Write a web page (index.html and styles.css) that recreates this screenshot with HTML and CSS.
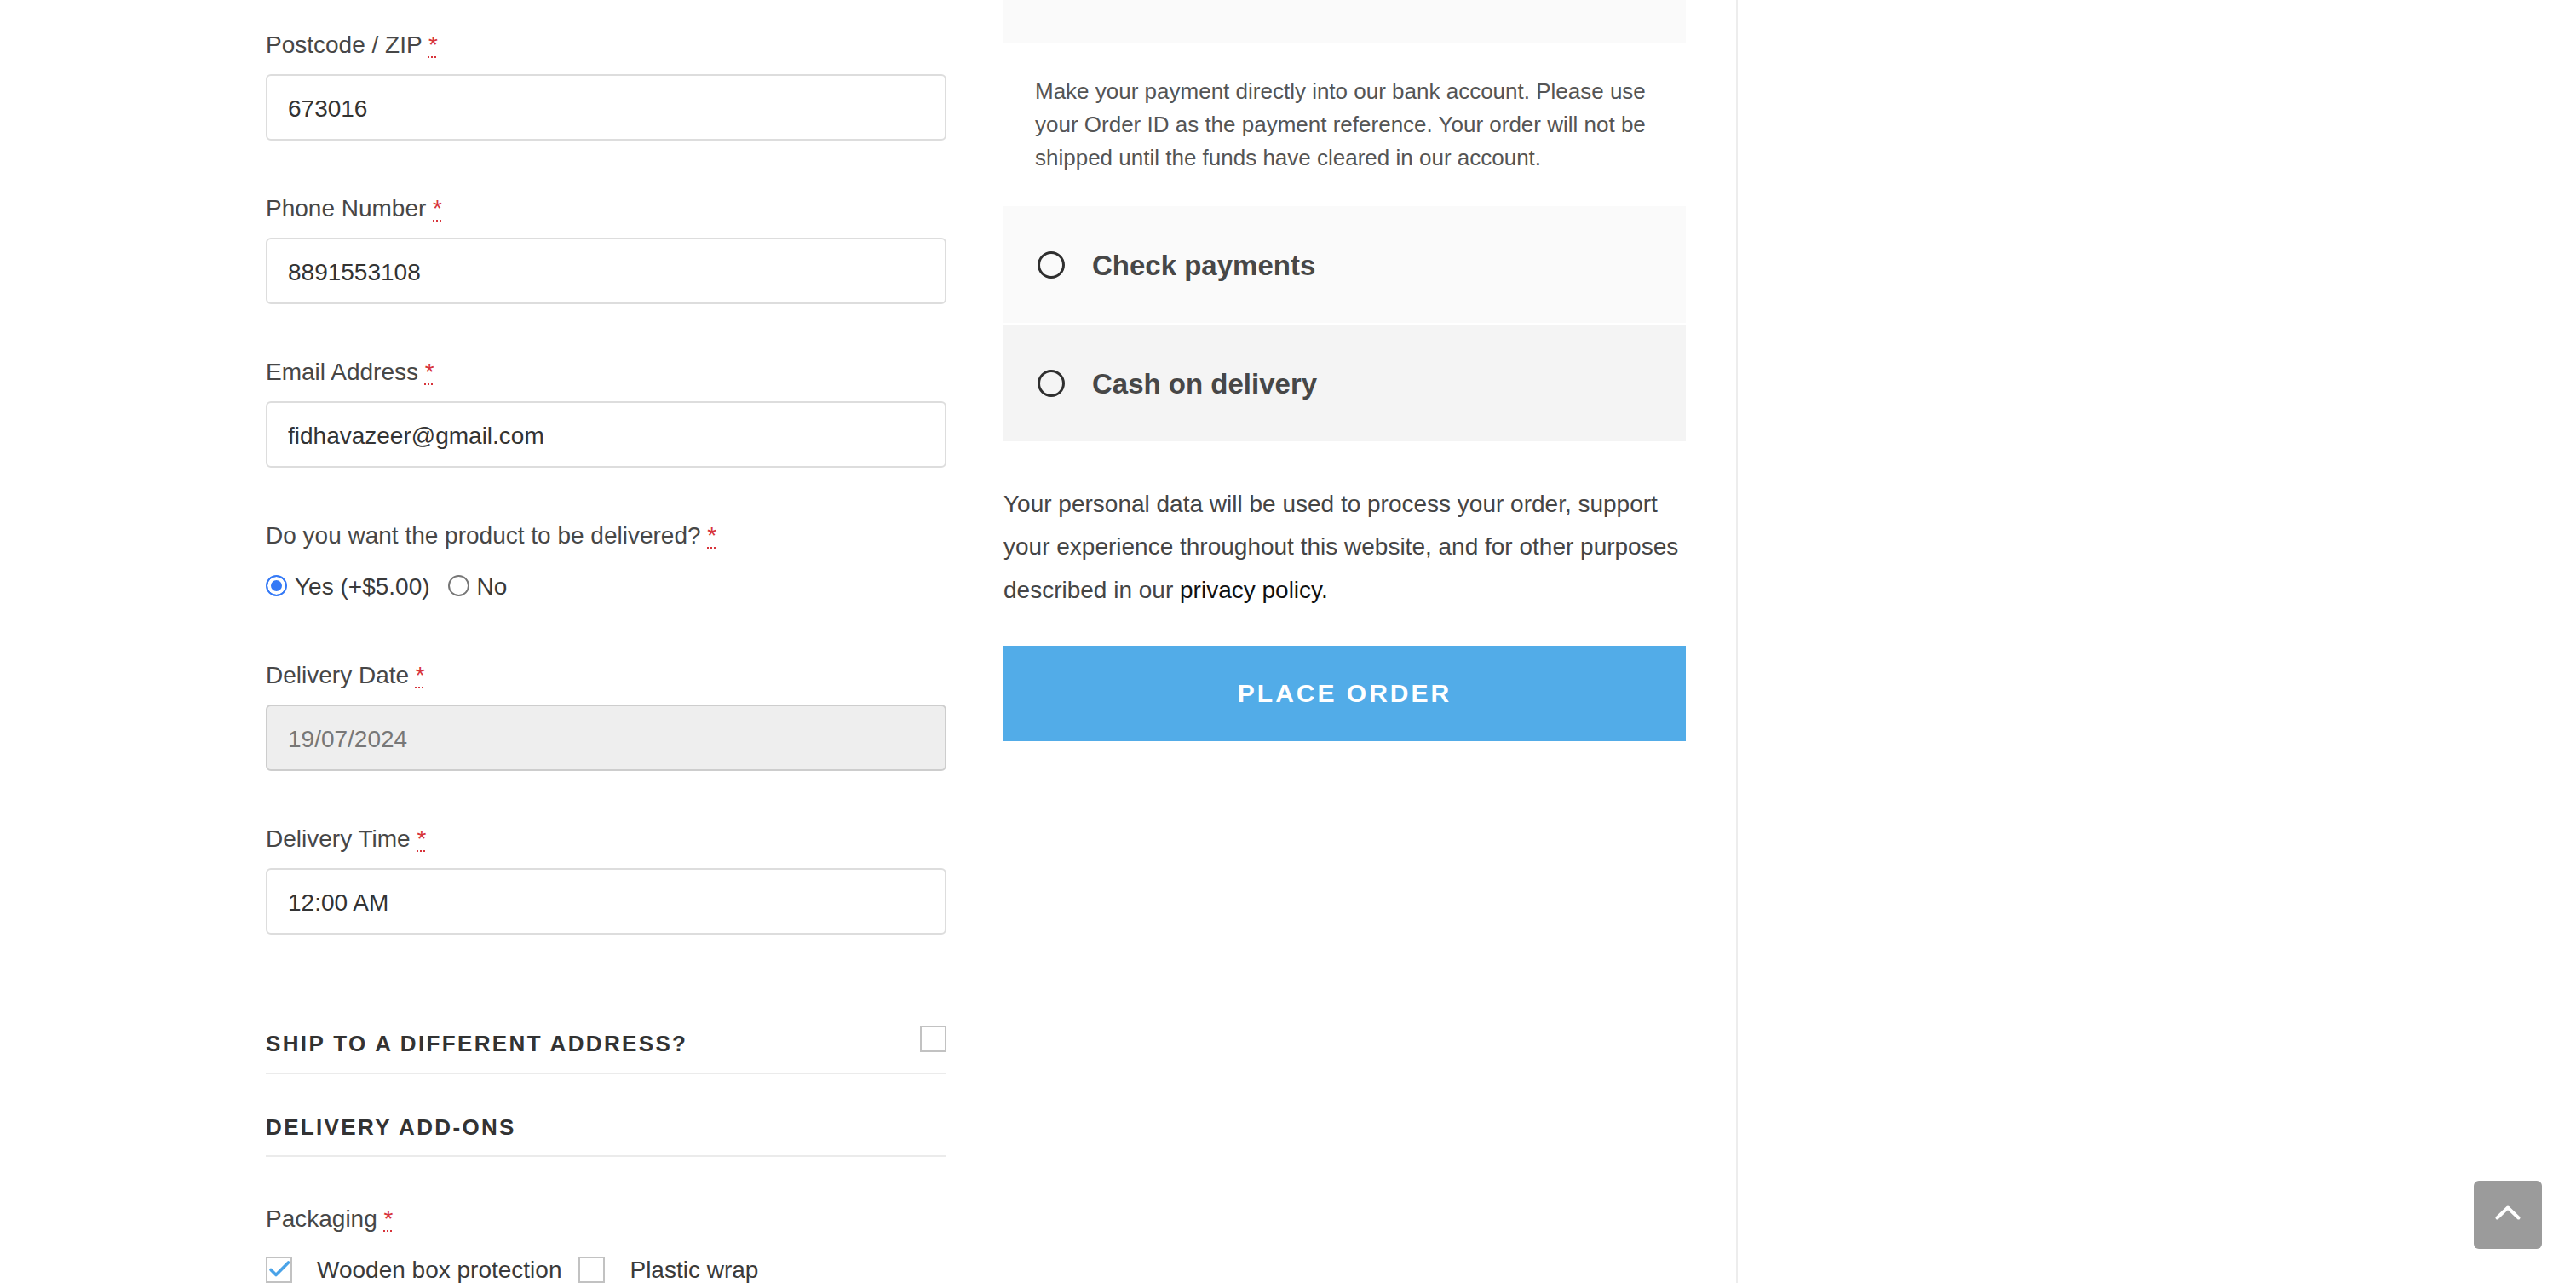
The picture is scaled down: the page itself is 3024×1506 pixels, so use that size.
FILE: index.html
```html
<!DOCTYPE html>
<html lang="en">
<head>
<meta charset="utf-8">
<title>Checkout</title>
<link rel="stylesheet" href="styles.css">
</head>
<body>
<div class="page">
  <main class="checkout">
    <section class="billing">
      <div class="field">
        <label class="field-label" for="postcode">Postcode / ZIP <abbr class="required" title="required">*</abbr></label>
        <input class="input" id="postcode" type="text" value="673016">
      </div>
      <div class="field">
        <label class="field-label" for="phone">Phone Number <abbr class="required" title="required">*</abbr></label>
        <input class="input" id="phone" type="text" value="8891553108">
      </div>
      <div class="field">
        <label class="field-label" for="email">Email Address <abbr class="required" title="required">*</abbr></label>
        <input class="input" id="email" type="text" value="fidhavazeer@gmail.com">
      </div>
      <div class="field field-radio">
        <span class="field-label">Do you want the product to be delivered? <abbr class="required" title="required">*</abbr></span>
        <div class="options">
          <label class="option"><span class="radio radio-on"></span><span class="option-text">Yes (+$5.00)</span></label>
          <label class="option"><span class="radio"></span><span class="option-text">No</span></label>
        </div>
      </div>
      <div class="field">
        <label class="field-label" for="ddate">Delivery Date <abbr class="required" title="required">*</abbr></label>
        <input class="input input-disabled" id="ddate" type="text" value="19/07/2024" readonly>
      </div>
      <div class="field field-last">
        <label class="field-label" for="dtime">Delivery Time <abbr class="required" title="required">*</abbr></label>
        <input class="input" id="dtime" type="text" value="12:00 AM">
      </div>

      <h3 class="section-heading heading-ship">
        <span class="heading-text">Ship to a different address?</span>
        <span class="box box-ship"></span>
      </h3>
      <h3 class="section-heading heading-addons"><span class="heading-text">Delivery Add-ons</span></h3>

      <div class="field field-pack">
        <span class="field-label">Packaging <abbr class="required" title="required">*</abbr></span>
        <div class="options">
          <label class="check">
            <span class="box"><svg class="tick" viewBox="0 0 27 27" width="27" height="27"><path d="M4 13.5 L10 19.5 L24.5 5" fill="none" stroke="#4aa3e8" stroke-width="3.6" stroke-linecap="round" stroke-linejoin="round"/></svg></span>
            <span class="check-text">Wooden box protection</span>
          </label>
          <label class="check">
            <span class="box"></span>
            <span class="check-text">Plastic wrap</span>
          </label>
        </div>
      </div>
    </section>

    <section class="payment">
      <div class="method-head"></div>
      <div class="method-desc">
        <p>Make your payment directly into our bank account. Please use your Order ID as the payment reference. Your order will not be shipped until the funds have cleared in our account.</p>
      </div>
      <div class="method method-check">
        <span class="pay-radio"></span>
        <span class="method-name">Check payments</span>
      </div>
      <div class="method method-cod">
        <span class="pay-radio"></span>
        <span class="method-name">Cash on delivery</span>
      </div>
      <p class="privacy">Your personal data will be used to process your order, support your experience throughout this website, and for other purposes described in our <a class="privacy-link" href="#">privacy policy.</a></p>
      <button class="place-order" type="button">Place order</button>
    </section>
  </main>
  <aside class="sidebar"></aside>
</div>
<a class="to-top" href="#" aria-label="Scroll to top">
  <svg viewBox="0 0 80 80" width="80" height="80"><path d="M27.5 43.5 L40 31.5 L52.5 43.5" fill="none" stroke="#fff" stroke-width="4" stroke-linecap="round" stroke-linejoin="round"/></svg>
</a>
</body>
</html>
```

FILE: styles.css
```css
html, body {
  margin: 0;
  padding: 0;
  height: 1506px;
  overflow: hidden;
  background: #fff;
}

body {
  font-family: "Liberation Sans", Arial, Helvetica, sans-serif;
  color: #444;
}

.page {
  display: flex;
  height: 1506px;
  padding-left: 312px;
  box-sizing: border-box;
}

.checkout {
  display: grid;
  grid-template-columns: 799px 801px;
  column-gap: 67px;
  align-items: start;
}

/* ---------- Billing column ---------- */
.billing {
  display: flex;
  flex-direction: column;
  padding-top: 31px;
}

.field {
  display: flex;
  flex-direction: column;
  margin-bottom: 58px;
}

.field-label {
  display: block;
  font-size: 28px;
  line-height: 40px;
  color: #474747;
  padding-top: 2px;
  margin-bottom: 14px;
}

.required {
  color: #d7343b;
  text-decoration: underline dotted;
  text-decoration-thickness: 2px;
  text-underline-offset: 4px;
  border: 0;
}

.input {
  box-sizing: border-box;
  width: 100%;
  height: 78px;
  margin: 0;
  padding: 3px 24px 0;
  border: 2px solid #dddddd;
  border-radius: 6px;
  background: #fff;
  font-family: "Liberation Sans", Arial, Helvetica, sans-serif;
  font-size: 28px;
  color: #333;
  outline: none;
}

.input-disabled {
  background: #eeeeee;
  border-color: #cdcdcd;
  color: #777;
}

.field-radio {
  margin-bottom: 63px;
}

.options {
  display: flex;
  align-items: center;
  height: 40px;
  margin-top: 5px;
}

.option {
  display: flex;
  align-items: center;
  font-size: 28px;
  line-height: 40px;
  color: #3a3a3a;
}

.option-text {
  padding-top: 2px;
}

.option + .option {
  margin-left: 21px;
}

.radio {
  box-sizing: border-box;
  width: 25px;
  height: 25px;
  border-radius: 50%;
  border: 2px solid #767676;
  background: #fff;
  margin-right: 9px;
  margin-bottom: 2px;
}

.radio-on {
  border-color: #3479f6;
  background: #3479f6;
  box-shadow: inset 0 0 0 4px #fff;
}

.field-last {
  margin-bottom: 0;
}

.section-heading {
  display: flex;
  justify-content: space-between;
  align-items: flex-start;
  margin: 0;
  font-size: 26px;
  font-weight: 700;
  line-height: 40px;
  letter-spacing: 2.35px;
  text-transform: uppercase;
  color: #333;
  border-bottom: 2px solid #ebebeb;
}

.heading-text {
  padding-top: 2px;
}

.heading-ship {
  margin-top: 106px;
  padding-bottom: 14px;
}

.heading-addons {
  margin-top: 40px;
  padding-bottom: 13px;
}

.box {
  box-sizing: border-box;
  display: inline-flex;
  align-items: center;
  justify-content: center;
  width: 31px;
  height: 31px;
  border: 2px solid #c2c2c2;
  background: #fff;
  flex-shrink: 0;
}

.box-ship {
  margin-top: 1px;
}

.tick {
  display: block;
  overflow: visible;
}

.field-pack {
  margin-top: 51px;
  margin-bottom: 0;
}

.field-pack .options {
  margin-top: 5px;
}

.check {
  display: flex;
  align-items: center;
  font-size: 28px;
  line-height: 40px;
  color: #3a3a3a;
}

.check + .check {
  margin-left: 20px;
}

.check-text {
  margin-left: 29px;
  padding-top: 2px;
}

/* ---------- Payment column ---------- */
.payment {
  display: flex;
  flex-direction: column;
}

.method-head {
  height: 50px;
  background: #fafafa;
}

.method-desc {
  padding: 38px 37px 37px;
}

.method-desc p {
  margin: 0;
  font-size: 26px;
  line-height: 39px;
  color: #555;
}

.method {
  display: flex;
  align-items: center;
  height: 137px;
  padding-left: 40px;
  box-sizing: border-box;
}

.method-check {
  background: #fafafa;
}

.method-cod {
  margin-top: 2px;
  background: #f4f4f4;
}

.pay-radio {
  box-sizing: border-box;
  width: 32px;
  height: 32px;
  border-radius: 50%;
  border: 3.5px solid #2f2f2f;
  margin-right: 32px;
  flex-shrink: 0;
}

.method-name {
  font-size: 33px;
  font-weight: 700;
  color: #474747;
  padding-top: 2px;
}

.privacy {
  margin: 49px 0 0;
  font-size: 28px;
  line-height: 1.8;
  color: #454545;
}

.privacy-link {
  color: #111;
  text-decoration: none;
}

.place-order {
  margin-top: 40px;
  height: 112px;
  width: 100%;
  border: 0;
  border-radius: 0;
  background: #52ace8;
  color: #fff;
  font-family: "Liberation Sans", Arial, Helvetica, sans-serif;
  font-size: 30px;
  font-weight: 700;
  letter-spacing: 3px;
  text-transform: uppercase;
  cursor: pointer;
}

/* ---------- Sidebar ---------- */
.sidebar {
  flex: 1;
  margin-left: 59px;
  border-left: 2px solid #ededed;
}

/* ---------- Scroll to top ---------- */
.to-top {
  position: fixed;
  right: 40px;
  bottom: 40px;
  width: 80px;
  height: 80px;
  border-radius: 6px;
  background: #9b9b9b;
  display: block;
}

.to-top svg {
  display: block;
}
```
